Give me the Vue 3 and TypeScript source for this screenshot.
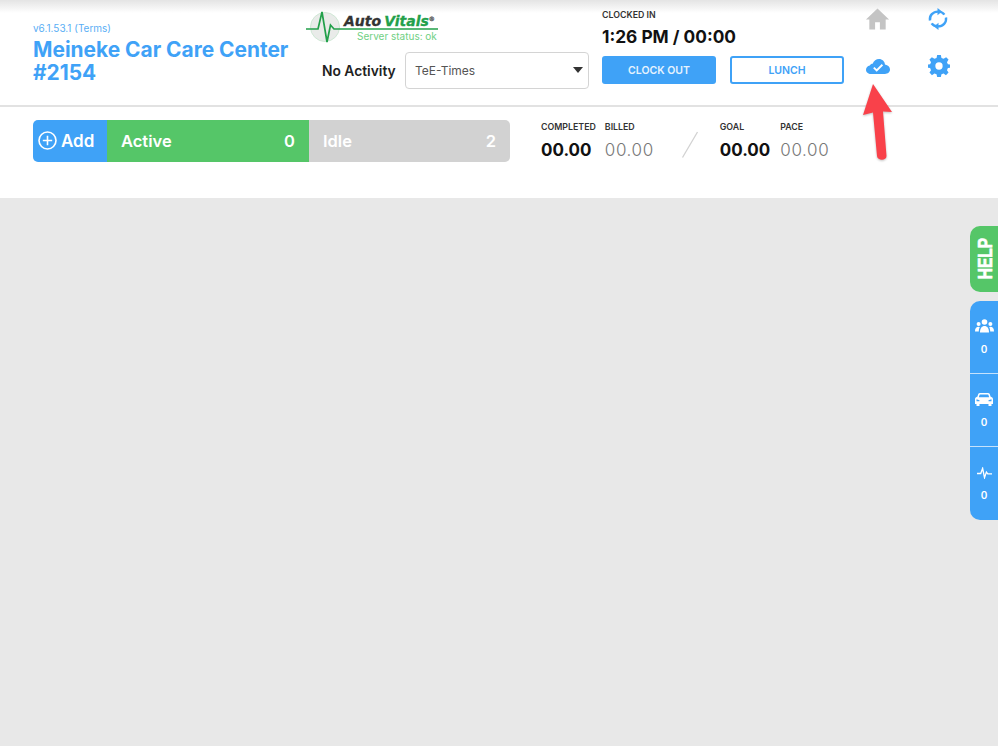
<script setup lang="ts">
interface Stat {
  label: string
  value: string
  strong: boolean
}

const doneStats: Stat[] = [
  { label: 'COMPLETED', value: '00.00', strong: true },
  { label: 'BILLED', value: '00.00', strong: false },
]
const goalStats: Stat[] = [
  { label: 'GOAL', value: '00.00', strong: true },
  { label: 'PACE', value: '00.00', strong: false },
]
</script>

<template>
  <div class="page">
    <header class="topbar">
      <div class="brand">
        <div class="version">v6.1.53.1 (Terms)</div>
        <h1 class="shop">Meineke Car Care Center #2154</h1>
      </div>

      <div class="status">
        <div class="logo">
          <svg class="logo-mark" width="134" height="32" viewBox="0 0 134 32">
            <circle cx="20" cy="16" r="14.5" fill="#e9ebe9" stroke="#cfe8d5" />
            <path d="M1 18H13L17 1L22 31L25.5 14L29 18H133" fill="none" stroke="#22a04a" stroke-width="1.7" />
          </svg>
          <span class="logo-name"><b class="auto">Auto</b><b class="vitals">Vitals</b><i class="reg">®</i></span>
          <span class="server">Server status: ok</span>
        </div>
        <div class="activity">
          <span class="activity-label">No Activity</span>
          <div class="select">
            <span>TeE-Times</span>
            <i class="caret"></i>
          </div>
        </div>
      </div>

      <div class="clock">
        <div class="clock-label">CLOCKED IN</div>
        <div class="clock-time">1:26 PM / 00:00</div>
        <div class="clock-buttons">
          <button class="btn btn-fill">CLOCK OUT</button>
          <button class="btn btn-line">LUNCH</button>
        </div>
      </div>

      <div class="tools">
        <svg width="25" height="24" viewBox="0 0 26 24">
          <path d="M13 1L25 12.5H21.5V23H15.5V15.5H10.5V23H4.5V12.5H1Z" fill="#c4c4c4" />
        </svg>
        <svg class="sync" width="20" height="22" viewBox="0 0 20 22" fill="none" stroke="#3fa2f7" stroke-width="2.4">
          <path d="M2 12.5C1.2 7.5 5 3.6 10 3.6C12.8 3.6 15 4.6 16.4 6.6" />
          <path d="M18 9.5C18.8 14.5 15 18.4 10 18.4C7.2 18.4 5 17.4 3.6 15.4" />
          <path d="M9.5 0L14 3.6L9.5 7.2Z" fill="#3fa2f7" stroke="none" />
          <path d="M10.5 22L6 18.4L10.5 14.8Z" fill="#3fa2f7" stroke="none" />
        </svg>
        <svg width="24" height="15" viewBox="0 0 24 15">
          <path d="M5 15C2.2 15 0 13.2 0 10.7C0 8.5 1.6 6.8 3.8 6.4C4.4 5.3 5.4 4.7 6.6 4.7C7.8 1.9 10.2 0 13 0C16.2 0 18.8 2.4 19 5.6C22 6.2 24 8.2 24 10.6C24 13.2 21.8 15 19 15Z" fill="#3fa2f7" />
          <path d="M7.8 8.6L10.7 11.4L16.4 5.8" fill="none" stroke="#fff" stroke-width="1.9" />
        </svg>
        <svg width="22" height="22" viewBox="0 0 24 24">
          <path d="M10 0H14L14.7 3.2L17 4.2L19.8 2.4L22.4 5L20.7 7.8L21.7 10L24 10.4V13.8L21.7 14.3L20.7 16.5L22.4 19.2L19.6 22L17 20.2L14.7 21.1L14 24H10L9.3 21.1L7 20.2L4.3 22L1.6 19.2L3.3 16.5L2.3 14.3L0 13.8V10.4L2.3 10L3.3 7.8L1.6 5L4.2 2.4L7 4.2L9.3 3.2Z" fill="#3fa2f7" />
          <circle cx="12" cy="12" r="4" fill="#fff" />
        </svg>
      </div>
    </header>

    <section class="summary">
      <div class="tally">
        <div class="tally-add">
          <svg width="19" height="19" viewBox="0 0 19 19" fill="none" stroke="#fff" stroke-width="1.6">
            <circle cx="9.5" cy="9.5" r="8.5" />
            <path d="M9.5 4.8V14.2M4.8 9.5H14.2" />
          </svg>
          <span>Add</span>
        </div>
        <div class="tally-active"><span>Active</span><span>0</span></div>
        <div class="tally-idle"><span>Idle</span><span>2</span></div>
      </div>

      <div class="stats">
        <div v-for="stat in doneStats" :key="stat.label" class="stat">
          <div class="stat-label">{{ stat.label }}</div>
          <div class="stat-value" :class="{ strong: stat.strong }">{{ stat.value }}</div>
        </div>
        <svg class="slash" width="18" height="28" viewBox="0 0 18 28">
          <path d="M16.5 1L1.5 26.5" stroke="#d2d2d2" stroke-width="1.3" />
        </svg>
        <div v-for="stat in goalStats" :key="stat.label" class="stat goal">
          <div class="stat-label">{{ stat.label }}</div>
          <div class="stat-value" :class="{ strong: stat.strong }">{{ stat.value }}</div>
        </div>
      </div>
    </section>

    <main class="content"></main>

    <svg class="arrow" width="36" height="82" viewBox="0 0 36 82">
      <path d="M14 0L33 28L24 27.5L27.5 72C27.5 77 18.5 77 18 72L14 28.5L4 31Z" fill="#f9414a" />
    </svg>

    <aside class="side">
      <div class="help"><span>HELP</span></div>
      <div class="queues">
        <div class="queue">
          <svg width="19" height="14" viewBox="0 0 19 14" fill="#fff">
            <circle cx="9.5" cy="3" r="2.8" />
            <circle cx="3.6" cy="5" r="2" />
            <circle cx="15.4" cy="5" r="2" />
            <path d="M5 13.5C5 9 7 7 9.5 7C12 7 14 9 14 13.5Z" />
            <path d="M0 12.5C0 9.3 1.3 7.8 3.6 7.8C4.3 7.8 4.6 8 4.8 8.2C4 9.5 3.8 11 3.8 12.5Z" />
            <path d="M19 12.5C19 9.3 17.7 7.8 15.4 7.8C14.7 7.8 14.4 8 14.2 8.2C15 9.5 15.2 11 15.2 12.5Z" />
          </svg>
          <span>0</span>
        </div>
        <div class="queue">
          <svg width="18" height="13" viewBox="0 0 18 13">
            <path fill-rule="evenodd" fill="#fff" d="M5 0H13C14.5 0 15 1 15.5 3.6L17.3 4.5C17.8 5 18 5.6 18 6.5V11H16.5V13H13.5V11H4.5V13H1.5V11H0V6.5C0 5.6 0.2 5 0.7 4.5L2.5 3.6C3 1 3.5 0 5 0ZM5 1.4C4.5 1.4 4.2 3 3.9 4.2H14.1C13.8 3 13.5 1.4 13 1.4ZM1.5 6.2V8.2H4.5V7.2ZM16.5 6.2L13.5 7.2V8.2H16.5Z" />
          </svg>
          <span>0</span>
        </div>
        <div class="queue">
          <svg width="15" height="12" viewBox="0 0 16 12" fill="none" stroke="#fff" stroke-width="1.4">
            <path d="M0 6.5H4L6 1L8 11L10 5L11.5 7H16" />
          </svg>
          <span>0</span>
        </div>
      </div>
    </aside>
  </div>
</template>

<style scoped>
.page {
  position: relative;
  width: 998px;
  height: 746px;
  display: flex;
  flex-direction: column;
  overflow: hidden;
  background: #fff;
  font-family: Inter, "Liberation Sans", sans-serif;
}

.topbar {
  box-sizing: border-box;
  height: 107px;
  display: flex;
  padding: 0 0 0 33px;
  border-bottom: 2px solid #e2e2e2;
  background: linear-gradient(#e4e4e4 0, #fff 13px);
}

.brand {
  width: 272px;
  padding-top: 21px;
}

.version {
  font-size: 10px;
  line-height: 14px;
  color: #5aaef5;
}

.shop {
  margin: 3px 0 0;
  width: 262px;
  font-size: 20.9px;
  line-height: 23px;
  font-weight: 700;
  color: #3fa2f7;
}

.status {
  width: 297px;
  display: flex;
  flex-direction: column;
  padding-top: 11px;
}

.logo {
  position: relative;
  width: 134px;
  height: 32px;
}

.logo-mark {
  display: block;
}

.logo-name {
  position: absolute;
  left: 39px;
  top: 1px;
  font-family: "DejaVu Sans", sans-serif;
  font-size: 14px;
  line-height: 18px;
  font-style: italic;
  white-space: nowrap;
  -webkit-text-stroke: 0.3px;
}

.auto {
  color: #333;
}

.vitals {
  margin-left: 3px;
  color: #22a04a;
}

.reg {
  position: relative;
  top: -5px;
  font-size: 6px;
  color: #555;
}

.server {
  position: absolute;
  left: 52px;
  top: 19px;
  font-size: 10px;
  line-height: 12px;
  white-space: nowrap;
  color: #6fd083;
}

.activity {
  display: flex;
  align-items: center;
  margin-top: 9px;
  padding-left: 17px;
}

.activity-label {
  width: 83px;
  font-size: 13.8px;
  font-weight: 600;
  color: #222;
  white-space: nowrap;
}

.select {
  box-sizing: border-box;
  width: 184px;
  height: 37px;
  display: flex;
  align-items: center;
  justify-content: space-between;
  padding: 0 5px 1px 9px;
  border: 1px solid #d4d4d4;
  border-radius: 4px;
  font-size: 12px;
  color: #555;
}

.caret {
  width: 0;
  height: 0;
  border-left: 5px solid transparent;
  border-right: 5px solid transparent;
  border-top: 6px solid #333;
}

.clock {
  width: 245px;
  padding-top: 10px;
}

.clock-label {
  font-size: 8.8px;
  line-height: 10px;
  font-weight: 600;
  color: #333;
}

.clock-time {
  margin-top: 7px;
  font-size: 17.3px;
  line-height: 20px;
  font-weight: 700;
  color: #111;
  white-space: nowrap;
}

.clock-buttons {
  display: flex;
  gap: 14px;
  margin-top: 9px;
}

.btn {
  box-sizing: border-box;
  width: 114px;
  height: 28px;
  padding: 0;
  border-radius: 3px;
  font-family: inherit;
  font-size: 10.5px;
  font-weight: 600;
}

.btn-fill {
  border: 0;
  background: #3fa2f7;
  color: #e6f3fe;
}

.btn-line {
  border: 2px solid #3fa2f7;
  background: #fff;
  color: #3fa2f7;
}

.tools {
  display: grid;
  grid-template-columns: 61px 61px;
  grid-template-rows: 38px 56px;
  justify-items: center;
  align-items: center;
  align-content: start;
}

.sync {
  margin-right: 1px;
}

.summary {
  height: 91px;
  display: flex;
  padding: 13px 0 0 33px;
  box-sizing: border-box;
}

.tally {
  width: 477px;
  height: 42px;
  display: flex;
  border-radius: 5px;
  overflow: hidden;
  font-size: 16.5px;
  font-weight: 600;
  color: #fff;
}

.tally-add {
  box-sizing: border-box;
  width: 74px;
  display: flex;
  align-items: center;
  gap: 4px;
  padding: 0 0 1px 5px;
  font-size: 17px;
  background: #3fa2f7;
}

.tally-active,
.tally-idle {
  display: flex;
  align-items: center;
  justify-content: space-between;
  padding: 0 14px 1px;
  box-sizing: border-box;
}

.tally-active {
  width: 202px;
  background: #55c668;
}

.tally-idle {
  width: 201px;
  background: #d2d2d2;
}

.stats {
  display: flex;
  padding: 2px 0 0 31px;
}

.stat {
  margin-right: 9px;
}

.stat.goal {
  margin-right: 10px;
}

.stat-label {
  font-size: 8.8px;
  line-height: 10px;
  font-weight: 600;
  color: #333;
  white-space: nowrap;
}

.stat-value {
  margin-top: 8px;
  font-size: 17px;
  line-height: 21px;
  font-weight: 300;
  letter-spacing: 0.6px;
  color: #777;
}

.stat-value.strong {
  font-weight: 700;
  letter-spacing: 0;
  color: #111;
}

.slash {
  margin: 9px 21px 0 18px;
}

.content {
  flex: 1;
  background: #e8e8e8;
}

.arrow {
  position: absolute;
  left: 859px;
  top: 84px;
  filter: drop-shadow(0 1px 1px rgba(0, 0, 0, 0.25));
}

.side {
  position: absolute;
  right: 0;
  top: 226px;
  width: 28px;
  display: flex;
  flex-direction: column;
  gap: 9px;
}

.help {
  box-sizing: border-box;
  height: 66px;
  padding-bottom: 2px;
  display: flex;
  align-items: center;
  justify-content: center;
  border-radius: 10px 0 0 10px;
  background: #55c668;
}

.help span {
  transform: rotate(-90deg) scaleX(0.74);
  font-family: "Liberation Sans", sans-serif;
  font-size: 21px;
  line-height: 21px;
  font-weight: 700;
  color: #fff;
  -webkit-text-stroke: 0.6px #fff;
}

.queues {
  display: flex;
  flex-direction: column;
  border-radius: 10px 0 0 10px;
  overflow: hidden;
  background: #3fa2f7;
}

.queue {
  box-sizing: border-box;
  height: 73px;
  display: flex;
  flex-direction: column;
  align-items: center;
  justify-content: center;
  gap: 10px;
  font-size: 10px;
  font-weight: 600;
  color: #fff;
  border-bottom: 1px solid #c5e2fc;
}

.queue:last-child {
  border-bottom: 0;
}
</style>
